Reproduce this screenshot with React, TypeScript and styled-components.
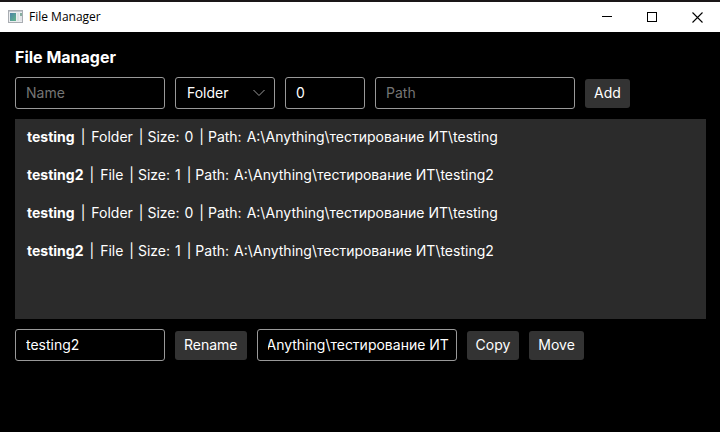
import React, { useLayoutEffect, useRef } from "react";
import styled, { createGlobalStyle } from "styled-components";

const GlobalStyle = createGlobalStyle`
  * { box-sizing: border-box; }
  body {
    margin: 0;
    background: #000;
    color: #fff;
    font: 14px/20px Inter, "Liberation Sans", sans-serif;
  }
`;

const Window = styled.div`
  min-height: 100vh;
  background: #000;
  border-top: 2px solid #1a1718;
`;

const TitleBar = styled.header`
  display: flex;
  align-items: center;
  height: 30px;
  padding-left: 8px;
  background: #fff;
  color: #000;
  font: 12px/16px "Open Sans", "Noto Sans", sans-serif;
`;

const AppTitle = styled.span`
  margin-left: 6px;
  flex: 1;
`;

const CaptionButton = styled.button`
  display: grid;
  place-items: center;
  width: 45px;
  height: 28px;
  padding: 0;
  border: 0;
  background: transparent;
  color: #000;
`;

const Content = styled.main`
  display: flex;
  flex-direction: column;
  gap: 10px;
  padding: 15px 14px 15px 15px;
`;

const Heading = styled.h1`
  margin: 0;
  font-size: 16px;
  line-height: 20px;
  font-weight: 700;
`;

const Toolbar = styled.form`
  display: flex;
  align-items: center;
  gap: 10px;
`;

const TextField = styled.input<{ $width: number }>`
  width: ${(p) => p.$width}px;
  height: 32px;
  padding: 0 7px 2px 10px;
  border: 1px solid #999;
  border-radius: 3px;
  background: #000;
  color: #fff;
  font: inherit;
  outline: none;
  &::placeholder { color: #757575; opacity: 1; }
`;

const SelectBox = styled.div`
  position: relative;
  width: 100px;
  height: 32px;
`;

const Select = styled.select`
  appearance: none;
  width: 100%;
  height: 100%;
  padding: 0 30px 0 11px;
  border: 1px solid #999;
  border-radius: 3px;
  background: #000;
  color: #fff;
  font: inherit;
`;

const Chevron = styled.svg`
  position: absolute;
  right: 10px;
  top: 12px;
  pointer-events: none;
`;

const Button = styled.button`
  height: 29px;
  padding: 0 9px;
  border: 0;
  border-radius: 3px;
  background: #333;
  color: #fff;
  font: inherit;
`;

const FileList = styled.ul`
  margin: 0;
  padding: 0;
  min-height: 200px;
  list-style: none;
  background: #2b2b2b;
`;

const FileRow = styled.li`
  display: flex;
  align-items: center;
  gap: 6px;
  height: 38px;
  padding: 0 12px 2px;
  white-space: pre;
`;

const Detail = styled.span`
  display: flex;
  gap: 5px;
`;

const FileName = styled.strong`
  font-weight: 700;
`;

type Entry = { name: string; kind: "Folder" | "File"; size: number; path: string };

const base = "A:\\Anything\\тестирование ИТ";
const folder: Entry = { name: "testing", kind: "Folder", size: 0, path: `${base}\\testing` };
const file: Entry = { name: "testing2", kind: "File", size: 1, path: `${base}\\testing2` };
const entries: Entry[] = [folder, file, folder, file];

function AppIcon() {
  return (
    <svg width="15" height="14" viewBox="0 0 15 14" aria-hidden="true">
      <defs>
        <linearGradient id="screen" x1="0" y1="0" x2="1" y2="1">
          <stop offset="0" stopColor="#4c83a8" />
          <stop offset="1" stopColor="#62b58a" />
        </linearGradient>
      </defs>
      <rect x="0.5" y="0.5" width="14" height="12" fill="#eceef0" stroke="#a9adb2" />
      <path d="M1 1.5h13" stroke="#c3c8d0" />
      <rect x="2" y="3" width="6" height="8" fill="url(#screen)" />
      <rect x="9" y="3" width="2" height="8" fill="#dce2e4" />
      <rect x="12" y="3" width="2" height="3" fill="#86ad9e" />
      <rect x="12" y="6" width="2" height="5" fill="#e2e4e8" />
    </svg>
  );
}

export default function App() {
  const target = useRef<HTMLInputElement>(null);

  useLayoutEffect(() => {
    const showEnd = () => {
      if (target.current) target.current.scrollLeft = target.current.scrollWidth;
    };
    showEnd();
    document.fonts?.ready.then(showEnd);
  }, []);

  return (
    <Window>
      <GlobalStyle />
      <TitleBar>
        <AppIcon />
        <AppTitle>File Manager</AppTitle>
        <CaptionButton aria-label="Minimize">
          <svg width="11" height="10"><path d="M0 4.5h10" stroke="currentColor" /></svg>
        </CaptionButton>
        <CaptionButton aria-label="Maximize">
          <svg width="11" height="11"><rect x="0.5" y="0.5" width="9" height="9" fill="none" stroke="currentColor" /></svg>
        </CaptionButton>
        <CaptionButton aria-label="Close">
          <svg width="11" height="11"><path d="M0.5 0.5l10 10M10.5 0.5L0.5 10.5" stroke="currentColor" strokeWidth="1.1" /></svg>
        </CaptionButton>
      </TitleBar>
      <Content>
        <Heading>File Manager</Heading>
        <Toolbar onSubmit={(e) => e.preventDefault()}>
          <TextField $width={150} placeholder="Name" aria-label="Name" />
          <SelectBox>
            <Select aria-label="Type" defaultValue="Folder">
              <option>Folder</option>
              <option>File</option>
            </Select>
            <Chevron width="12" height="8" viewBox="0 0 12 8">
              <path d="M0.5 1L6 6.5L11.5 1" fill="none" stroke="#999" />
            </Chevron>
          </SelectBox>
          <TextField $width={80} defaultValue="0" aria-label="Size" />
          <TextField $width={200} placeholder="Path" aria-label="Path" />
          <Button>Add</Button>
        </Toolbar>
        <FileList>
          {entries.map((entry, i) => (
            <FileRow key={i}>
              <FileName>{entry.name}</FileName>
              <span>|</span>
              <span>{entry.kind}</span>
              <Detail>
                <span>| Size:</span>
                <span>{entry.size}</span>
              </Detail>
              <Detail>
                <span>| Path:</span>
                <span>{entry.path}</span>
              </Detail>
            </FileRow>
          ))}
        </FileList>
        <Toolbar onSubmit={(e) => e.preventDefault()}>
          <TextField $width={150} defaultValue="testing2" aria-label="New name" />
          <Button>Rename</Button>
          <TextField ref={target} $width={200} defaultValue={base} aria-label="Target path" />
          <Button>Copy</Button>
          <Button>Move</Button>
        </Toolbar>
      </Content>
    </Window>
  );
}
